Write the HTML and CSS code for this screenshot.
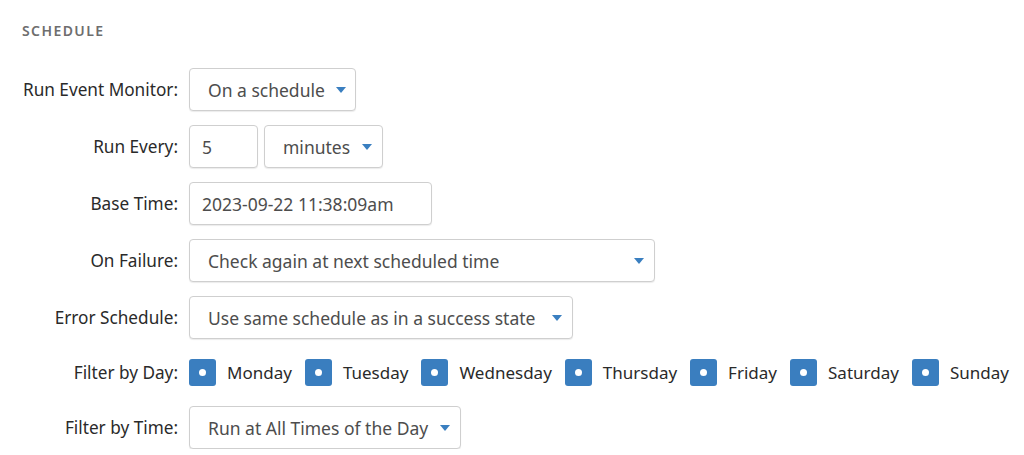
FILE: index.html
```html
<!DOCTYPE html>
<html lang="en">
<head>
<meta charset="UTF-8" />
<title>Schedule</title>
<link rel="stylesheet" href="styles.css">
</head>
<body>

<div class="panel">
  <h2 class="section-title">Schedule</h2>

  <div class="form-grid">
    <label class="field-label">Run Event Monitor:</label>
    <div class="field">
      <div class="select w-run">
        <span>On a schedule</span>
        <svg class="caret" width="10" height="6" viewBox="0 0 10 6"><path d="M0 0h10L5 6z"/></svg>
      </div>
    </div>

    <label class="field-label">Run Every:</label>
    <div class="field">
      <input class="text-input w-num" type="text" value="5">
      <div class="select w-unit">
        <span>minutes</span>
        <svg class="caret" width="10" height="6" viewBox="0 0 10 6"><path d="M0 0h10L5 6z"/></svg>
      </div>
    </div>

    <label class="field-label">Base Time:</label>
    <div class="field">
      <input class="text-input w-time" type="text" value="2023-09-22 11:38:09am">
    </div>

    <label class="field-label">On Failure:</label>
    <div class="field">
      <div class="select w-fail">
        <span>Check again at next scheduled time</span>
        <svg class="caret" width="10" height="6" viewBox="0 0 10 6"><path d="M0 0h10L5 6z"/></svg>
      </div>
    </div>

    <label class="field-label">Error Schedule:</label>
    <div class="field">
      <div class="select w-error">
        <span>Use same schedule as in a success state</span>
        <svg class="caret" width="10" height="6" viewBox="0 0 10 6"><path d="M0 0h10L5 6z"/></svg>
      </div>
    </div>

    <label class="field-label">Filter by Day:</label>
    <div class="field days">
      <span class="day"><span class="check"></span>Monday</span>
      <span class="day"><span class="check"></span>Tuesday</span>
      <span class="day"><span class="check"></span>Wednesday</span>
      <span class="day"><span class="check"></span>Thursday</span>
      <span class="day"><span class="check"></span>Friday</span>
      <span class="day"><span class="check"></span>Saturday</span>
      <span class="day"><span class="check"></span>Sunday</span>
    </div>

    <label class="field-label">Filter by Time:</label>
    <div class="field">
      <div class="select w-time-filter">
        <span>Run at All Times of the Day</span>
        <svg class="caret" width="10" height="6" viewBox="0 0 10 6"><path d="M0 0h10L5 6z"/></svg>
      </div>
    </div>
  </div>
</div>

</body>
</html>
```

FILE: styles.css
```css
body { margin: 0; background: #fff; font-family: "Noto Sans", "Liberation Sans", sans-serif; color: #222; }
.panel { padding: 23px 0 0 22px; }
.section-title { margin: 0 0 29px; font-size: 14px; line-height: 16px; font-weight: 600; letter-spacing: 1.4px; text-transform: uppercase; color: #6e6e6e; }

.form-grid { display: grid; grid-template-columns: 156px auto; column-gap: 11px; row-gap: 14px; align-items: center; }
.field-label { text-align: right; font-size: 17.2px; color: #2a2a2a; white-space: nowrap; }
.field { display: flex; gap: 6px; align-items: center; min-height: 43px; }

.select, .text-input { box-sizing: border-box; height: 43px; border: 1px solid #cfcfcf; border-radius: 4px; background: #fff; box-shadow: 0 1px 1px rgba(0,0,0,0.08); font-family: inherit; font-size: 17.5px; color: #4d4d4d; }
.select { display: flex; align-items: center; justify-content: space-between; padding: 0 10px 0 18px; white-space: nowrap; }
.text-input { padding: 0 12px; outline: none; }
.caret { fill: #3a7fc0; flex: none; margin-left: 11px; }

.w-run { width: 167px; }
.w-num { width: 69px; }
.w-unit { width: 119px; }
.w-time { width: 243px; }
.w-fail { width: 466px; }
.w-error { width: 384px; }
.w-time-filter { width: 272px; }

.days { min-height: 39px; gap: 13px; }
.day { display: flex; align-items: center; gap: 11px; font-size: 17px; color: #2a2a2a; white-space: nowrap; }
.check { position: relative; width: 27px; height: 27px; border-radius: 3px; background: #3a7ebf; }
.check::after { content: ""; position: absolute; left: 10px; top: 10px; width: 7px; height: 7px; border-radius: 50%; background: #fff; }
```
